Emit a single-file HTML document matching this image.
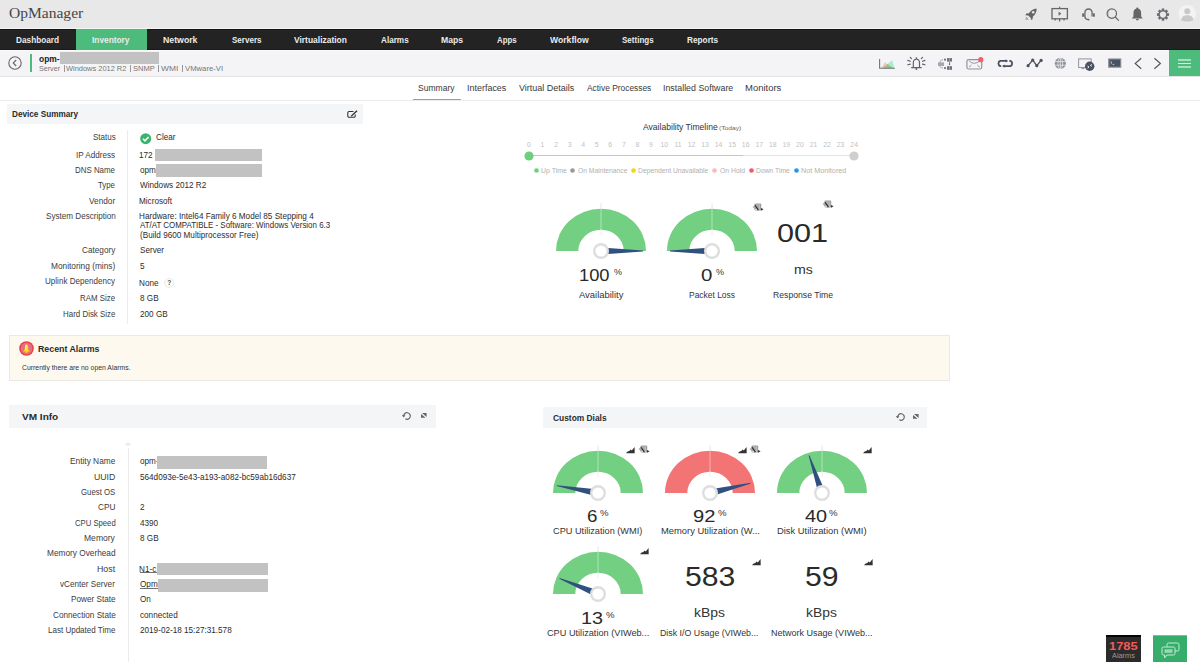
<!DOCTYPE html>
<html><head><meta charset="utf-8"><title>OpManager</title>
<style>
html,body{margin:0;padding:0;}
body{width:1200px;height:662px;overflow:hidden;position:relative;background:#fff;font-family:"Liberation Sans",sans-serif;}
.t{position:absolute;white-space:nowrap;line-height:normal;transform-origin:0 0;}
.n{}
.r{position:absolute;}
</style></head><body>
<div class="r" style="left:0px;top:0px;width:1200px;height:28px;background:#e8e8e9;"></div>
<div class="r" style="left:0px;top:28px;width:1200px;height:1px;background:#f4f4f4;"></div>
<div class="t n" style="left:9.18px;top:5.00px;font-size:14.50px;font-weight:400;color:#464646;font-family:'Liberation Serif', serif;transform:scaleX(1.0717);">OpManager</div>
<div class="r" style="left:0px;top:29px;width:1200px;height:21px;background:#232323;"></div>
<div class="r" style="left:0px;top:29px;width:1200px;height:1px;background:#151515;"></div>
<div class="r" style="left:0px;top:49px;width:1200px;height:1px;background:#1a1a1a;"></div>
<div class="r" style="left:76px;top:29px;width:71px;height:21px;background:#4cbb7c;"></div>
<div class="t" style="left:16.36px;top:34.00px;font-size:9.40px;font-weight:700;color:#ebebeb;font-family:'Liberation Sans', sans-serif;transform:scaleX(0.8799);">Dashboard</div>
<div class="t" style="left:92.46px;top:34.00px;font-size:9.40px;font-weight:700;color:#ebebeb;font-family:'Liberation Sans', sans-serif;transform:scaleX(0.8885);">Inventory</div>
<div class="t" style="left:163.43px;top:34.00px;font-size:9.40px;font-weight:700;color:#ebebeb;font-family:'Liberation Sans', sans-serif;transform:scaleX(0.9322);">Network</div>
<div class="t" style="left:231.76px;top:34.00px;font-size:9.40px;font-weight:700;color:#ebebeb;font-family:'Liberation Sans', sans-serif;transform:scaleX(0.8570);">Servers</div>
<div class="t" style="left:294.46px;top:34.00px;font-size:9.40px;font-weight:700;color:#ebebeb;font-family:'Liberation Sans', sans-serif;transform:scaleX(0.9016);">Virtualization</div>
<div class="t" style="left:380.60px;top:34.00px;font-size:9.40px;font-weight:700;color:#ebebeb;font-family:'Liberation Sans', sans-serif;transform:scaleX(0.8703);">Alarms</div>
<div class="t" style="left:441.24px;top:34.00px;font-size:9.40px;font-weight:700;color:#ebebeb;font-family:'Liberation Sans', sans-serif;transform:scaleX(0.9205);">Maps</div>
<div class="t" style="left:496.60px;top:34.00px;font-size:9.40px;font-weight:700;color:#ebebeb;font-family:'Liberation Sans', sans-serif;transform:scaleX(0.8388);">Apps</div>
<div class="t" style="left:549.60px;top:34.00px;font-size:9.40px;font-weight:700;color:#ebebeb;font-family:'Liberation Sans', sans-serif;transform:scaleX(0.9203);">Workflow</div>
<div class="t" style="left:621.76px;top:34.00px;font-size:9.40px;font-weight:700;color:#ebebeb;font-family:'Liberation Sans', sans-serif;transform:scaleX(0.8566);">Settings</div>
<div class="t" style="left:686.66px;top:34.00px;font-size:9.40px;font-weight:700;color:#ebebeb;font-family:'Liberation Sans', sans-serif;transform:scaleX(0.8812);">Reports</div>
<div class="r" style="left:0px;top:50px;width:1200px;height:1px;background:#fafafa;"></div>
<div class="r" style="left:0px;top:51px;width:1200px;height:25px;background:#f4f4f6;"></div>
<div class="r" style="left:0px;top:76px;width:1200px;height:1px;background:#e4e4e6;"></div>
<svg class="r" style="left:8px;top:56px;" width="14" height="14" viewBox="0 0 14 14" ><circle cx="7" cy="7" r="6.2" fill="none" stroke="#666" stroke-width="1.1"/><path d="M8.2 4 L5.2 7 L8.2 10" fill="none" stroke="#666" stroke-width="1.1"/></svg>
<div class="r" style="left:30px;top:54px;width:2px;height:18px;background:#4cbb7c;"></div>
<div class="t" style="left:38.66px;top:54.00px;font-size:9.20px;font-weight:700;color:#222;font-family:'Liberation Sans', sans-serif;transform:scaleX(0.9192);">opm-</div>
<div class="r" style="left:60px;top:52px;width:99px;height:11.6px;background:#c2c2c2;"></div>
<div class="t n" style="left:38.68px;top:64.00px;font-size:7.60px;font-weight:400;color:#747474;font-family:'Liberation Sans', sans-serif;transform:scaleX(0.9412);">Server</div>
<div class="t n" style="left:65.96px;top:64.00px;font-size:7.60px;font-weight:400;color:#747474;font-family:'Liberation Sans', sans-serif;transform:scaleX(0.9795);">Windows 2012 R2</div>
<div class="t n" style="left:132.66px;top:64.00px;font-size:7.60px;font-weight:400;color:#747474;font-family:'Liberation Sans', sans-serif;transform:scaleX(0.9904);">SNMP</div>
<div class="t n" style="left:160.96px;top:64.00px;font-size:7.60px;font-weight:400;color:#747474;font-family:'Liberation Sans', sans-serif;transform:scaleX(1.1038);">WMI</div>
<div class="t n" style="left:184.96px;top:64.00px;font-size:7.60px;font-weight:400;color:#747474;font-family:'Liberation Sans', sans-serif;transform:scaleX(1.0147);">VMware-VI</div>
<div class="r" style="left:63.6px;top:64.5px;width:0.8px;height:7px;background:#999;"></div>
<div class="r" style="left:130.4px;top:64.5px;width:0.8px;height:7px;background:#999;"></div>
<div class="r" style="left:158.4px;top:64.5px;width:0.8px;height:7px;background:#999;"></div>
<div class="r" style="left:182.4px;top:64.5px;width:0.8px;height:7px;background:#999;"></div>
<div class="r" style="left:1168.5px;top:50px;width:31.5px;height:26px;background:#4cbb7c;"></div>
<div class="r" style="left:1177.9px;top:59.1px;width:12.8px;height:1.7px;background:rgba(255,255,255,0.5);"></div>
<div class="r" style="left:1177.9px;top:63.0px;width:12.8px;height:1.0px;background:rgba(255,255,255,0.8);"></div>
<div class="r" style="left:1177.9px;top:66.4px;width:12.8px;height:1.7px;background:rgba(255,255,255,0.5);"></div>
<div class="r" style="left:0px;top:100px;width:1200px;height:1px;background:#ececec;"></div>
<div class="t n" style="left:418.31px;top:83.00px;font-size:8.90px;font-weight:400;color:#3a3a3a;font-family:'Liberation Sans', sans-serif;transform:scaleX(0.9631);">Summary</div>
<div class="t n" style="left:466.69px;top:83.00px;font-size:8.90px;font-weight:400;color:#3a3a3a;font-family:'Liberation Sans', sans-serif;transform:scaleX(1.0090);">Interfaces</div>
<div class="t n" style="left:518.65px;top:83.00px;font-size:8.90px;font-weight:400;color:#3a3a3a;font-family:'Liberation Sans', sans-serif;transform:scaleX(1.0133);">Virtual Details</div>
<div class="t n" style="left:586.80px;top:83.00px;font-size:8.90px;font-weight:400;color:#3a3a3a;font-family:'Liberation Sans', sans-serif;transform:scaleX(0.9448);">Active Processes</div>
<div class="t n" style="left:663.10px;top:83.00px;font-size:8.90px;font-weight:400;color:#3a3a3a;font-family:'Liberation Sans', sans-serif;transform:scaleX(0.9964);">Installed Software</div>
<div class="t n" style="left:745.24px;top:83.00px;font-size:8.90px;font-weight:400;color:#3a3a3a;font-family:'Liberation Sans', sans-serif;transform:scaleX(1.0662);">Monitors</div>
<div class="r" style="left:412.5px;top:98.5px;width:48.5px;height:1.6px;background:#4fcf6c;"></div>
<div class="r" style="left:6.5px;top:103.5px;width:356px;height:20px;background:#f4f5f7;"></div>
<div class="t" style="left:11.77px;top:109.00px;font-size:8.80px;font-weight:700;color:#2b2b2b;font-family:'Liberation Sans', sans-serif;transform:scaleX(0.9316);">Device Summary</div>
<svg class="r" style="left:346.5px;top:109.5px;" width="11" height="8" viewBox="0 0 11 8" ><path d="M6.5 1.5 H2 A1.2 1.2 0 0 0 0.8 2.7 V6 A1.2 1.2 0 0 0 2 7.2 H7 A1.2 1.2 0 0 0 8.2 6 V4.5" fill="none" stroke="#333" stroke-width="1.1"/><path d="M4 5.5 L9.5 0.3 L10.5 1.3 L5 6.3 L3.8 6.6 Z" fill="#333"/></svg>
<div class="r" style="left:127px;top:130px;width:1px;height:194px;background:#ececec;"></div>
<div class="t n" style="left:92.54px;top:132.00px;font-size:8.60px;font-weight:400;color:#3c3c3c;font-family:'Liberation Sans', sans-serif;transform:scaleX(0.9328);">Status</div>
<div class="t n" style="left:76.17px;top:150.00px;font-size:8.60px;font-weight:400;color:#3c3c3c;font-family:'Liberation Sans', sans-serif;transform:scaleX(0.9436);">IP Address</div>
<div class="t n" style="left:75.37px;top:165.00px;font-size:8.60px;font-weight:400;color:#3c3c3c;font-family:'Liberation Sans', sans-serif;transform:scaleX(0.9199);">DNS Name</div>
<div class="t n" style="left:98.44px;top:180.00px;font-size:8.60px;font-weight:400;color:#3c3c3c;font-family:'Liberation Sans', sans-serif;transform:scaleX(0.9081);">Type</div>
<div class="t n" style="left:139.96px;top:180.00px;font-size:8.60px;font-weight:400;color:#2c2c2c;font-family:'Liberation Sans', sans-serif;transform:scaleX(0.9500);">Windows 2012 R2</div>
<div class="t n" style="left:88.96px;top:196.00px;font-size:8.60px;font-weight:400;color:#3c3c3c;font-family:'Liberation Sans', sans-serif;transform:scaleX(0.9613);">Vendor</div>
<div class="t n" style="left:139.35px;top:196.00px;font-size:8.60px;font-weight:400;color:#2c2c2c;font-family:'Liberation Sans', sans-serif;transform:scaleX(0.9500);">Microsoft</div>
<div class="t n" style="left:45.63px;top:211.00px;font-size:8.60px;font-weight:400;color:#3c3c3c;font-family:'Liberation Sans', sans-serif;transform:scaleX(0.9434);">System Description</div>
<div class="t n" style="left:139.35px;top:211.00px;font-size:8.60px;font-weight:400;color:#2c2c2c;font-family:'Liberation Sans', sans-serif;transform:scaleX(0.9500);">Hardware: Intel64 Family 6 Model 85 Stepping 4</div>
<div class="t n" style="left:81.69px;top:245.00px;font-size:8.60px;font-weight:400;color:#3c3c3c;font-family:'Liberation Sans', sans-serif;transform:scaleX(0.9540);">Category</div>
<div class="t n" style="left:139.63px;top:245.00px;font-size:8.60px;font-weight:400;color:#2c2c2c;font-family:'Liberation Sans', sans-serif;transform:scaleX(0.9500);">Server</div>
<div class="t n" style="left:51.23px;top:261.00px;font-size:8.60px;font-weight:400;color:#3c3c3c;font-family:'Liberation Sans', sans-serif;transform:scaleX(0.9680);">Monitoring (mins)</div>
<div class="t n" style="left:139.67px;top:261.00px;font-size:8.60px;font-weight:400;color:#2c2c2c;font-family:'Liberation Sans', sans-serif;transform:scaleX(0.9500);">5</div>
<div class="t n" style="left:44.99px;top:276.00px;font-size:8.60px;font-weight:400;color:#3c3c3c;font-family:'Liberation Sans', sans-serif;transform:scaleX(0.9389);">Uplink Dependency</div>
<div class="t n" style="left:80.27px;top:293.00px;font-size:8.60px;font-weight:400;color:#3c3c3c;font-family:'Liberation Sans', sans-serif;transform:scaleX(0.9179);">RAM Size</div>
<div class="t n" style="left:139.63px;top:293.00px;font-size:8.60px;font-weight:400;color:#2c2c2c;font-family:'Liberation Sans', sans-serif;transform:scaleX(0.9500);">8 GB</div>
<div class="t n" style="left:62.86px;top:309.00px;font-size:8.60px;font-weight:400;color:#3c3c3c;font-family:'Liberation Sans', sans-serif;transform:scaleX(0.9234);">Hard Disk Size</div>
<div class="t n" style="left:139.59px;top:309.00px;font-size:8.60px;font-weight:400;color:#2c2c2c;font-family:'Liberation Sans', sans-serif;transform:scaleX(0.9500);">200 GB</div>
<div class="t n" style="left:140.00px;top:220.00px;font-size:8.60px;font-weight:400;color:#2c2c2c;font-family:'Liberation Sans', sans-serif;transform:scaleX(0.9232);">AT/AT COMPATIBLE - Software: Windows Version 6.3</div>
<div class="t n" style="left:139.51px;top:230.00px;font-size:8.60px;font-weight:400;color:#2c2c2c;font-family:'Liberation Sans', sans-serif;transform:scaleX(0.9500);">(Build 9600 Multiprocessor Free)</div>
<div class="t n" style="left:139.35px;top:278.00px;font-size:8.60px;font-weight:400;color:#2c2c2c;font-family:'Liberation Sans', sans-serif;transform:scaleX(0.9500);">None</div>
<svg class="r" style="left:164px;top:278.3px;" width="10.5" height="10" viewBox="0 0 10.5 10" ><circle cx="5.2" cy="5" r="4.5" fill="#fdfdfd" stroke="#e6e6e6" stroke-width="0.9"/><text x="5.3" y="7.3" font-size="6.6" font-weight="700" text-anchor="middle" fill="#555" font-family="Liberation Sans">?</text></svg>
<svg class="r" style="left:140px;top:133px;" width="11.5" height="11.5" viewBox="0 0 11.5 11.5" ><circle cx="5.7" cy="5.7" r="5.5" fill="#3cb36d"/><path d="M3 5.8 L5 7.8 L8.6 4" fill="none" stroke="#fff" stroke-width="1.5"/></svg>
<div class="t n" style="left:156.39px;top:132.00px;font-size:8.60px;font-weight:400;color:#2c2c2c;font-family:'Liberation Sans', sans-serif;transform:scaleX(0.9500);">Clear</div>
<div class="t n" style="left:139.39px;top:150.00px;font-size:8.60px;font-weight:400;color:#2c2c2c;font-family:'Liberation Sans', sans-serif;transform:scaleX(0.9500);">172</div>
<div class="r" style="left:155px;top:148.5px;width:107px;height:12px;background:#c2c2c2;"></div>
<div class="t n" style="left:139.67px;top:165.00px;font-size:8.60px;font-weight:400;color:#2c2c2c;font-family:'Liberation Sans', sans-serif;transform:scaleX(0.9500);">opm</div>
<div class="r" style="left:155.5px;top:164px;width:106.5px;height:12.6px;background:#c2c2c2;"></div>
<div class="t n" style="left:642.80px;top:122.00px;font-size:8.40px;font-weight:400;color:#333;font-family:'Liberation Sans', sans-serif;transform:scaleX(1.0241);">Availability Timeline</div>
<div class="t n" style="left:719.10px;top:124.00px;font-size:6.20px;font-weight:400;color:#666;font-family:'Liberation Sans', sans-serif;transform:scaleX(1.0803);">(Today)</div>
<div class="t n" style="left:527.07px;top:141.00px;font-size:6.90px;font-weight:400;color:#c2c2c2;font-family:'Liberation Sans', sans-serif;">0</div>
<div class="t n" style="left:540.53px;top:141.00px;font-size:6.90px;font-weight:400;color:#c2c2c2;font-family:'Liberation Sans', sans-serif;">1</div>
<div class="t n" style="left:554.19px;top:141.00px;font-size:6.90px;font-weight:400;color:#c2c2c2;font-family:'Liberation Sans', sans-serif;">2</div>
<div class="t n" style="left:567.74px;top:141.00px;font-size:6.90px;font-weight:400;color:#c2c2c2;font-family:'Liberation Sans', sans-serif;">3</div>
<div class="t n" style="left:581.32px;top:141.00px;font-size:6.90px;font-weight:400;color:#c2c2c2;font-family:'Liberation Sans', sans-serif;">4</div>
<div class="t n" style="left:594.84px;top:141.00px;font-size:6.90px;font-weight:400;color:#c2c2c2;font-family:'Liberation Sans', sans-serif;">5</div>
<div class="t n" style="left:608.35px;top:141.00px;font-size:6.90px;font-weight:400;color:#c2c2c2;font-family:'Liberation Sans', sans-serif;">6</div>
<div class="t n" style="left:621.94px;top:141.00px;font-size:6.90px;font-weight:400;color:#c2c2c2;font-family:'Liberation Sans', sans-serif;">7</div>
<div class="t n" style="left:635.47px;top:141.00px;font-size:6.90px;font-weight:400;color:#c2c2c2;font-family:'Liberation Sans', sans-serif;">8</div>
<div class="t n" style="left:649.04px;top:141.00px;font-size:6.90px;font-weight:400;color:#c2c2c2;font-family:'Liberation Sans', sans-serif;">9</div>
<div class="t n" style="left:660.53px;top:141.00px;font-size:6.90px;font-weight:400;color:#c2c2c2;font-family:'Liberation Sans', sans-serif;">10</div>
<div class="t n" style="left:674.38px;top:141.00px;font-size:6.90px;font-weight:400;color:#c2c2c2;font-family:'Liberation Sans', sans-serif;">11</div>
<div class="t n" style="left:687.68px;top:141.00px;font-size:6.90px;font-weight:400;color:#c2c2c2;font-family:'Liberation Sans', sans-serif;">12</div>
<div class="t n" style="left:701.20px;top:141.00px;font-size:6.90px;font-weight:400;color:#c2c2c2;font-family:'Liberation Sans', sans-serif;">13</div>
<div class="t n" style="left:714.72px;top:141.00px;font-size:6.90px;font-weight:400;color:#c2c2c2;font-family:'Liberation Sans', sans-serif;">14</div>
<div class="t n" style="left:728.30px;top:141.00px;font-size:6.90px;font-weight:400;color:#c2c2c2;font-family:'Liberation Sans', sans-serif;">15</div>
<div class="t n" style="left:741.85px;top:141.00px;font-size:6.90px;font-weight:400;color:#c2c2c2;font-family:'Liberation Sans', sans-serif;">16</div>
<div class="t n" style="left:755.43px;top:141.00px;font-size:6.90px;font-weight:400;color:#c2c2c2;font-family:'Liberation Sans', sans-serif;">17</div>
<div class="t n" style="left:768.95px;top:141.00px;font-size:6.90px;font-weight:400;color:#c2c2c2;font-family:'Liberation Sans', sans-serif;">18</div>
<div class="t n" style="left:782.52px;top:141.00px;font-size:6.90px;font-weight:400;color:#c2c2c2;font-family:'Liberation Sans', sans-serif;">19</div>
<div class="t n" style="left:796.12px;top:141.00px;font-size:6.90px;font-weight:400;color:#c2c2c2;font-family:'Liberation Sans', sans-serif;">20</div>
<div class="t n" style="left:809.70px;top:141.00px;font-size:6.90px;font-weight:400;color:#c2c2c2;font-family:'Liberation Sans', sans-serif;">21</div>
<div class="t n" style="left:823.27px;top:141.00px;font-size:6.90px;font-weight:400;color:#c2c2c2;font-family:'Liberation Sans', sans-serif;">22</div>
<div class="t n" style="left:836.79px;top:141.00px;font-size:6.90px;font-weight:400;color:#c2c2c2;font-family:'Liberation Sans', sans-serif;">23</div>
<div class="t n" style="left:850.30px;top:141.00px;font-size:6.90px;font-weight:400;color:#c2c2c2;font-family:'Liberation Sans', sans-serif;">24</div>
<div class="r" style="left:529px;top:155.3px;width:325px;height:1.1px;background:#e3e3e3;"></div>
<div class="r" style="left:529px;top:155.3px;width:213.5px;height:1.1px;background:#9fe0a8;"></div>
<svg class="r" style="left:524px;top:151px;" width="10" height="10" viewBox="0 0 10 10" ><circle cx="5" cy="5" r="4.6" fill="#6fcf7f"/></svg>
<svg class="r" style="left:849.2px;top:150.8px;" width="10" height="10" viewBox="0 0 10 10" ><circle cx="5" cy="5" r="4.6" fill="#cfcfcf"/></svg>
<svg class="r" style="left:534.1px;top:167.7px;" width="5" height="5" viewBox="0 0 5 5" ><circle cx="2.5" cy="2.5" r="2.3" fill="#6fcf7f"/></svg>
<div class="t n" style="left:540.98px;top:167.00px;font-size:6.60px;font-weight:400;color:#b0b0b0;font-family:'Liberation Sans', sans-serif;transform:scaleX(1.0522);">Up Time</div>
<svg class="r" style="left:569.9px;top:167.7px;" width="5" height="5" viewBox="0 0 5 5" ><circle cx="2.5" cy="2.5" r="2.3" fill="#999999"/></svg>
<div class="t n" style="left:577.50px;top:167.00px;font-size:6.60px;font-weight:400;color:#b0b0b0;font-family:'Liberation Sans', sans-serif;transform:scaleX(1.0226);">On Maintenance</div>
<svg class="r" style="left:630.9px;top:167.7px;" width="5" height="5" viewBox="0 0 5 5" ><circle cx="2.5" cy="2.5" r="2.3" fill="#f5d311"/></svg>
<div class="t n" style="left:637.96px;top:167.00px;font-size:6.60px;font-weight:400;color:#b0b0b0;font-family:'Liberation Sans', sans-serif;transform:scaleX(1.0253);">Dependent Unavailable</div>
<svg class="r" style="left:712.2px;top:167.7px;" width="5" height="5" viewBox="0 0 5 5" ><circle cx="2.5" cy="2.5" r="2.3" fill="#f9b9b9"/></svg>
<div class="t n" style="left:719.69px;top:167.00px;font-size:6.60px;font-weight:400;color:#b0b0b0;font-family:'Liberation Sans', sans-serif;transform:scaleX(1.0357);">On Hold</div>
<svg class="r" style="left:749.0px;top:167.7px;" width="5" height="5" viewBox="0 0 5 5" ><circle cx="2.5" cy="2.5" r="2.3" fill="#ef5b62"/></svg>
<div class="t n" style="left:756.16px;top:167.00px;font-size:6.60px;font-weight:400;color:#b0b0b0;font-family:'Liberation Sans', sans-serif;transform:scaleX(1.0256);">Down Time</div>
<svg class="r" style="left:794.0px;top:167.7px;" width="5" height="5" viewBox="0 0 5 5" ><circle cx="2.5" cy="2.5" r="2.3" fill="#2a93ee"/></svg>
<div class="t n" style="left:801.12px;top:167.00px;font-size:6.60px;font-weight:400;color:#b0b0b0;font-family:'Liberation Sans', sans-serif;transform:scaleX(1.0941);">Not Monitored</div>
<svg class="r" style="left:553.85px;top:203.0px;" width="94" height="60" viewBox="0 0 94 60" ><path d="M2.00 48 A45 42.30 0 0 1 92.00 48 L69.70 48 A22.7 21.34 0 0 0 24.30 48 Z" fill="#73cf82"/><line x1="47.0" y1="0.20" x2="47.0" y2="5.70" stroke="#e4e6ea" stroke-width="1"/><line x1="47.0" y1="5.70" x2="47.0" y2="31.96" stroke="rgba(255,255,255,0.45)" stroke-width="1"/><line x1="47.0" y1="26.66" x2="47.0" y2="31.96" stroke="#eceef1" stroke-width="1"/><path d="M47.00 51.60 L89.00 48.40 L89.00 47.60 L47.00 44.40 Z" fill="#30507f"/><circle cx="47.0" cy="48" r="6.8" fill="#fff" stroke="#dedede" stroke-width="2.4"/></svg>
<svg class="r" style="left:665.4px;top:203.0px;" width="94" height="60" viewBox="0 0 94 60" ><path d="M2.00 48 A45 42.30 0 0 1 92.00 48 L69.70 48 A22.7 21.34 0 0 0 24.30 48 Z" fill="#73cf82"/><line x1="47.0" y1="0.20" x2="47.0" y2="5.70" stroke="#e4e6ea" stroke-width="1"/><line x1="47.0" y1="5.70" x2="47.0" y2="31.96" stroke="rgba(255,255,255,0.45)" stroke-width="1"/><line x1="47.0" y1="26.66" x2="47.0" y2="31.96" stroke="#eceef1" stroke-width="1"/><path d="M47.00 44.40 L5.00 47.60 L5.00 48.40 L47.00 51.60 Z" fill="#30507f"/><circle cx="47.0" cy="48" r="6.8" fill="#fff" stroke="#dedede" stroke-width="2.4"/></svg>
<div class="t n" style="left:579.33px;top:265.00px;font-size:17.40px;font-weight:400;color:#2a2a2a;font-family:'Liberation Sans', sans-serif;transform:scaleX(1.0533);">100</div>
<div class="t n" style="left:614.28px;top:267.00px;font-size:8.50px;font-weight:400;color:#333;font-family:'Liberation Sans', sans-serif;transform:scaleX(1.0617);">%</div>
<div class="t n" style="left:700.88px;top:265.00px;font-size:17.40px;font-weight:400;color:#2a2a2a;font-family:'Liberation Sans', sans-serif;transform:scaleX(1.1734);">0</div>
<div class="t n" style="left:715.98px;top:267.00px;font-size:8.50px;font-weight:400;color:#333;font-family:'Liberation Sans', sans-serif;transform:scaleX(1.0617);">%</div>
<div class="t n" style="left:578.50px;top:290.00px;font-size:8.80px;font-weight:400;color:#333;font-family:'Liberation Sans', sans-serif;transform:scaleX(1.0724);">Availability</div>
<div class="t n" style="left:689.32px;top:290.00px;font-size:8.80px;font-weight:400;color:#333;font-family:'Liberation Sans', sans-serif;transform:scaleX(0.9594);">Packet Loss</div>
<div class="t n" style="left:777.48px;top:219.00px;font-size:25.50px;font-weight:400;color:#2a2a2a;font-family:'Liberation Sans', sans-serif;transform:scaleX(1.1988);">001</div>
<div class="t n" style="left:793.58px;top:263.00px;font-size:12.50px;font-weight:400;color:#333;font-family:'Liberation Sans', sans-serif;transform:scaleX(1.1336);">ms</div>
<div class="t n" style="left:773.31px;top:290.00px;font-size:8.80px;font-weight:400;color:#333;font-family:'Liberation Sans', sans-serif;transform:scaleX(0.9831);">Response Time</div>
<svg class="r" style="left:751.5px;top:202.8px;" width="13" height="9" viewBox="0 0 13 9" ><path d="M0.5 4 L3.6 1.3 L3.6 6.8 Z" fill="#b0b0b0"/><rect x="2.6" y="0.5" width="6.6" height="7.1" rx="0.8" fill="#9c9c9c"/><path d="M4.3 1.2 V7 M5.9 1.2 V7 M7.5 1.2 V7" stroke="#d6d6d6" stroke-width="0.55"/><path d="M3.2 2.2 L6.4 7.2" stroke="#262626" stroke-width="1.2"/><path d="M9 5 L11.6 6.3 L9 7.7 Z" fill="#333"/><circle cx="3.9" cy="6.6" r="0.7" fill="#fff"/></svg>
<svg class="r" style="left:821.5px;top:200.3px;" width="13" height="9" viewBox="0 0 13 9" ><path d="M0.5 4 L3.6 1.3 L3.6 6.8 Z" fill="#b0b0b0"/><rect x="2.6" y="0.5" width="6.6" height="7.1" rx="0.8" fill="#9c9c9c"/><path d="M4.3 1.2 V7 M5.9 1.2 V7 M7.5 1.2 V7" stroke="#d6d6d6" stroke-width="0.55"/><path d="M3.2 2.2 L6.4 7.2" stroke="#262626" stroke-width="1.2"/><path d="M9 5 L11.6 6.3 L9 7.7 Z" fill="#333"/><circle cx="3.9" cy="6.6" r="0.7" fill="#fff"/></svg>
<div class="r" style="left:9px;top:335px;width:941px;height:46px;background:#fdf9ef;box-sizing:border-box;border:1px solid #ebe9e3;"></div>
<svg class="r" style="left:19.3px;top:340.8px;" width="16" height="16" viewBox="0 0 16 16" ><circle cx="7.5" cy="7.5" r="7.3" fill="#ef3b47"/><circle cx="7.5" cy="7.5" r="5.9" fill="#e7707f"/><path d="M7.5 3.4 C8.6 3.4 9 4.3 9 5.6 L9.3 8.8 L10.9 10.4 H4.1 L5.7 8.8 L6 5.6 C6 4.3 6.4 3.4 7.5 3.4 Z" fill="#ffdc1e"/><path d="M7.5 3.6 C6.6 3.8 6.5 5 6.4 6.5 L6.2 9 L7.5 9 Z" fill="#fff2a0"/><circle cx="7.5" cy="11" r="0.9" fill="#ffdc1e"/></svg>
<div class="t" style="left:38.13px;top:343.00px;font-size:9.40px;font-weight:700;color:#2b2b2b;font-family:'Liberation Sans', sans-serif;transform:scaleX(0.9398);">Recent Alarms</div>
<div class="t n" style="left:21.66px;top:364.00px;font-size:7.00px;font-weight:400;color:#333;font-family:'Liberation Sans', sans-serif;transform:scaleX(0.9791);">Currently there are no open Alarms.</div>
<div class="r" style="left:9.3px;top:404.7px;width:427px;height:23.2px;background:#f4f5f7;"></div>
<div class="t" style="left:22.15px;top:412.00px;font-size:9.30px;font-weight:700;color:#2b2b2b;font-family:'Liberation Sans', sans-serif;transform:scaleX(1.0798);">VM Info</div>
<svg class="r" style="left:402px;top:410.8px;" width="10" height="10" viewBox="0 0 10 10" ><path d="M1.7 5 A3.3 3.3 0 1 1 3.35 7.86" fill="none" stroke="#666" stroke-width="1.15"/><path d="M-0.1 4.3 L3.4 4.3 L1.65 6.5 Z" fill="#666"/></svg>
<svg class="r" style="left:420.7px;top:412.6px;" width="6" height="5" viewBox="0 0 6 5" ><path d="M0 0.9 L4.6 4.8 L0 4.8 Z M1 0 L5.6 0 L5.6 3.9 Z" fill="#666"/></svg>
<div class="r" style="left:127.5px;top:447.5px;width:1px;height:215px;background:#ececec;"></div>
<svg class="r" style="left:123.5px;top:441px;" width="8" height="5" viewBox="0 0 8 5" ><path d="M0.5 4.5 L4 0.8 L7.5 4.5 Z" fill="#ececec"/></svg>
<div class="t n" style="left:70.03px;top:456.00px;font-size:8.60px;font-weight:400;color:#3c3c3c;font-family:'Liberation Sans', sans-serif;transform:scaleX(0.9683);">Entity Name</div>
<div class="t n" style="left:94.15px;top:472.00px;font-size:8.60px;font-weight:400;color:#3c3c3c;font-family:'Liberation Sans', sans-serif;transform:scaleX(1.0124);">UUID</div>
<div class="t n" style="left:139.67px;top:472.00px;font-size:8.60px;font-weight:400;color:#2c2c2c;font-family:'Liberation Sans', sans-serif;transform:scaleX(0.9500);">564d093e-5e43-a193-a082-bc59ab16d637</div>
<div class="t n" style="left:81.11px;top:487.00px;font-size:8.60px;font-weight:400;color:#3c3c3c;font-family:'Liberation Sans', sans-serif;transform:scaleX(0.9069);">Guest OS</div>
<div class="t n" style="left:98.19px;top:502.00px;font-size:8.60px;font-weight:400;color:#3c3c3c;font-family:'Liberation Sans', sans-serif;transform:scaleX(0.9607);">CPU</div>
<div class="t n" style="left:139.59px;top:502.00px;font-size:8.60px;font-weight:400;color:#2c2c2c;font-family:'Liberation Sans', sans-serif;transform:scaleX(0.9500);">2</div>
<div class="t n" style="left:74.81px;top:518.00px;font-size:8.60px;font-weight:400;color:#3c3c3c;font-family:'Liberation Sans', sans-serif;transform:scaleX(0.8960);">CPU Speed</div>
<div class="t n" style="left:139.84px;top:518.00px;font-size:8.60px;font-weight:400;color:#2c2c2c;font-family:'Liberation Sans', sans-serif;transform:scaleX(0.9500);">4390</div>
<div class="t n" style="left:84.12px;top:533.00px;font-size:8.60px;font-weight:400;color:#3c3c3c;font-family:'Liberation Sans', sans-serif;transform:scaleX(0.9948);">Memory</div>
<div class="t n" style="left:139.63px;top:533.00px;font-size:8.60px;font-weight:400;color:#2c2c2c;font-family:'Liberation Sans', sans-serif;transform:scaleX(0.9500);">8 GB</div>
<div class="t n" style="left:46.94px;top:548.00px;font-size:8.60px;font-weight:400;color:#3c3c3c;font-family:'Liberation Sans', sans-serif;transform:scaleX(0.9634);">Memory Overhead</div>
<div class="t n" style="left:96.89px;top:564.00px;font-size:8.60px;font-weight:400;color:#3c3c3c;font-family:'Liberation Sans', sans-serif;transform:scaleX(1.0270);">Host</div>
<div class="t n" style="left:60.26px;top:579.00px;font-size:8.60px;font-weight:400;color:#3c3c3c;font-family:'Liberation Sans', sans-serif;transform:scaleX(0.9493);">vCenter Server</div>
<div class="t n" style="left:70.74px;top:594.00px;font-size:8.60px;font-weight:400;color:#3c3c3c;font-family:'Liberation Sans', sans-serif;transform:scaleX(0.9530);">Power State</div>
<div class="t n" style="left:139.63px;top:594.00px;font-size:8.60px;font-weight:400;color:#2c2c2c;font-family:'Liberation Sans', sans-serif;transform:scaleX(0.9500);">On</div>
<div class="t n" style="left:52.59px;top:610.00px;font-size:8.60px;font-weight:400;color:#3c3c3c;font-family:'Liberation Sans', sans-serif;transform:scaleX(0.9517);">Connection State</div>
<div class="t n" style="left:139.67px;top:610.00px;font-size:8.60px;font-weight:400;color:#2c2c2c;font-family:'Liberation Sans', sans-serif;transform:scaleX(0.9500);">connected</div>
<div class="t n" style="left:47.96px;top:625.00px;font-size:8.60px;font-weight:400;color:#3c3c3c;font-family:'Liberation Sans', sans-serif;transform:scaleX(0.9336);">Last Updated Time</div>
<div class="t n" style="left:139.59px;top:625.00px;font-size:8.60px;font-weight:400;color:#2c2c2c;font-family:'Liberation Sans', sans-serif;transform:scaleX(0.9500);">2019-02-18 15:27:31.578</div>
<div class="t n" style="left:139.67px;top:456.00px;font-size:8.60px;font-weight:400;color:#2c2c2c;font-family:'Liberation Sans', sans-serif;transform:scaleX(0.9500);">opm-</div>
<div class="r" style="left:157px;top:456.3px;width:110.2px;height:12.3px;background:#c2c2c2;"></div>
<div class="t n" style="left:139.35px;top:564.00px;font-size:8.60px;font-weight:400;color:#2c2c2c;font-family:'Liberation Sans', sans-serif;transform:scaleX(0.9500);">N1-c</div>
<div class="r" style="left:140px;top:572.4px;width:17.2px;height:0.8px;background:#707070;"></div>
<div class="r" style="left:157.1px;top:563.2px;width:111.1px;height:11.6px;background:#c2c2c2;"></div>
<div class="t n" style="left:139.63px;top:579.00px;font-size:8.60px;font-weight:400;color:#2c2c2c;font-family:'Liberation Sans', sans-serif;transform:scaleX(0.9500);">Opm</div>
<div class="r" style="left:140px;top:587.6px;width:18px;height:0.8px;background:#707070;"></div>
<div class="r" style="left:157.6px;top:578.5px;width:110.6px;height:13px;background:#c2c2c2;"></div>
<div class="r" style="left:542.5px;top:406.8px;width:384.7px;height:21px;background:#f4f5f7;"></div>
<div class="t" style="left:553.16px;top:413.00px;font-size:8.70px;font-weight:700;color:#2b2b2b;font-family:'Liberation Sans', sans-serif;transform:scaleX(0.9654);">Custom Dials</div>
<svg class="r" style="left:896px;top:412px;" width="10" height="10" viewBox="0 0 10 10" ><path d="M1.7 5 A3.3 3.3 0 1 1 3.35 7.86" fill="none" stroke="#666" stroke-width="1.15"/><path d="M-0.1 4.3 L3.4 4.3 L1.65 6.5 Z" fill="#666"/></svg>
<svg class="r" style="left:913.2px;top:414.2px;" width="6" height="5" viewBox="0 0 6 5" ><path d="M0 0.9 L4.6 4.8 L0 4.8 Z M1 0 L5.6 0 L5.6 3.9 Z" fill="#666"/></svg>
<svg class="r" style="left:551.3px;top:444.8px;" width="94" height="60" viewBox="0 0 94 60" ><path d="M2.00 48 A45 42.30 0 0 1 92.00 48 L69.70 48 A22.7 21.34 0 0 0 24.30 48 Z" fill="#73cf82"/><line x1="47.0" y1="0.20" x2="47.0" y2="5.70" stroke="#e4e6ea" stroke-width="1"/><line x1="47.0" y1="5.70" x2="47.0" y2="31.96" stroke="rgba(255,255,255,0.45)" stroke-width="1"/><line x1="47.0" y1="26.66" x2="47.0" y2="31.96" stroke="#eceef1" stroke-width="1"/><path d="M47.67 44.46 L5.82 40.21 L5.67 41.00 L46.33 51.54 Z" fill="#30507f"/><circle cx="47.0" cy="48" r="6.8" fill="#fff" stroke="#dedede" stroke-width="2.4"/></svg>
<svg class="r" style="left:663.1px;top:444.8px;" width="94" height="60" viewBox="0 0 94 60" ><path d="M2.00 48 A45 42.30 0 0 1 92.00 48 L69.70 48 A22.7 21.34 0 0 0 24.30 48 Z" fill="#f27474"/><line x1="47.0" y1="0.20" x2="47.0" y2="5.70" stroke="#e4e6ea" stroke-width="1"/><line x1="47.0" y1="5.70" x2="47.0" y2="31.96" stroke="rgba(255,255,255,0.45)" stroke-width="1"/><line x1="47.0" y1="26.66" x2="47.0" y2="31.96" stroke="#eceef1" stroke-width="1"/><path d="M47.90 51.49 L87.78 38.57 L87.58 37.79 L46.10 44.51 Z" fill="#30507f"/><circle cx="47.0" cy="48" r="6.8" fill="#fff" stroke="#dedede" stroke-width="2.4"/></svg>
<svg class="r" style="left:774.8px;top:444.8px;" width="94" height="60" viewBox="0 0 94 60" ><path d="M2.00 48 A45 42.30 0 0 1 92.00 48 L69.70 48 A22.7 21.34 0 0 0 24.30 48 Z" fill="#73cf82"/><line x1="47.0" y1="0.20" x2="47.0" y2="5.70" stroke="#e4e6ea" stroke-width="1"/><line x1="47.0" y1="5.70" x2="47.0" y2="31.96" stroke="rgba(255,255,255,0.45)" stroke-width="1"/><line x1="47.0" y1="26.66" x2="47.0" y2="31.96" stroke="#eceef1" stroke-width="1"/><path d="M50.42 46.89 L34.40 10.33 L33.64 10.58 L43.58 49.11 Z" fill="#30507f"/><circle cx="47.0" cy="48" r="6.8" fill="#fff" stroke="#dedede" stroke-width="2.4"/></svg>
<svg class="r" style="left:551.0px;top:546.0px;" width="94" height="60" viewBox="0 0 94 60" ><path d="M2.00 48 A45 42.30 0 0 1 92.00 48 L69.70 48 A22.7 21.34 0 0 0 24.30 48 Z" fill="#73cf82"/><line x1="47.0" y1="0.20" x2="47.0" y2="5.70" stroke="#e4e6ea" stroke-width="1"/><line x1="47.0" y1="5.70" x2="47.0" y2="31.96" stroke="rgba(255,255,255,0.45)" stroke-width="1"/><line x1="47.0" y1="26.66" x2="47.0" y2="31.96" stroke="#eceef1" stroke-width="1"/><path d="M48.43 44.70 L8.61 31.95 L8.30 32.69 L45.57 51.30 Z" fill="#30507f"/><circle cx="47.0" cy="48" r="6.8" fill="#fff" stroke="#dedede" stroke-width="2.4"/></svg>
<svg class="r" style="left:626.1px;top:447px;" width="9" height="6.5" viewBox="0 0 9 6.5" ><path d="M0 6.2 L1.6 4.4 L3.4 3.9 L4.5 2.5 L5.8 3.6 L8.6 0 L8.7 6.2 Z" fill="#333"/></svg>
<svg class="r" style="left:637.5px;top:444.9px;" width="13" height="9" viewBox="0 0 13 9" ><path d="M0.5 4 L3.6 1.3 L3.6 6.8 Z" fill="#b0b0b0"/><rect x="2.6" y="0.5" width="6.6" height="7.1" rx="0.8" fill="#9c9c9c"/><path d="M4.3 1.2 V7 M5.9 1.2 V7 M7.5 1.2 V7" stroke="#d6d6d6" stroke-width="0.55"/><path d="M3.2 2.2 L6.4 7.2" stroke="#262626" stroke-width="1.2"/><path d="M9 5 L11.6 6.3 L9 7.7 Z" fill="#333"/><circle cx="3.9" cy="6.6" r="0.7" fill="#fff"/></svg>
<svg class="r" style="left:737.6px;top:447px;" width="9" height="6.5" viewBox="0 0 9 6.5" ><path d="M0 6.2 L1.6 4.4 L3.4 3.9 L4.5 2.5 L5.8 3.6 L8.6 0 L8.7 6.2 Z" fill="#333"/></svg>
<svg class="r" style="left:749.1px;top:444.9px;" width="13" height="9" viewBox="0 0 13 9" ><path d="M0.5 4 L3.6 1.3 L3.6 6.8 Z" fill="#b0b0b0"/><rect x="2.6" y="0.5" width="6.6" height="7.1" rx="0.8" fill="#9c9c9c"/><path d="M4.3 1.2 V7 M5.9 1.2 V7 M7.5 1.2 V7" stroke="#d6d6d6" stroke-width="0.55"/><path d="M3.2 2.2 L6.4 7.2" stroke="#262626" stroke-width="1.2"/><path d="M9 5 L11.6 6.3 L9 7.7 Z" fill="#333"/><circle cx="3.9" cy="6.6" r="0.7" fill="#fff"/></svg>
<svg class="r" style="left:863.3px;top:447px;" width="9" height="6.5" viewBox="0 0 9 6.5" ><path d="M0 6.2 L1.6 4.4 L3.4 3.9 L4.5 2.5 L5.8 3.6 L8.6 0 L8.7 6.2 Z" fill="#333"/></svg>
<svg class="r" style="left:640.1px;top:548.4px;" width="9" height="6.5" viewBox="0 0 9 6.5" ><path d="M0 6.2 L1.6 4.4 L3.4 3.9 L4.5 2.5 L5.8 3.6 L8.6 0 L8.7 6.2 Z" fill="#333"/></svg>
<svg class="r" style="left:751.7px;top:559px;" width="9" height="6.5" viewBox="0 0 9 6.5" ><path d="M0 6.2 L1.6 4.4 L3.4 3.9 L4.5 2.5 L5.8 3.6 L8.6 0 L8.7 6.2 Z" fill="#333"/></svg>
<svg class="r" style="left:863.5px;top:559px;" width="9" height="6.5" viewBox="0 0 9 6.5" ><path d="M0 6.2 L1.6 4.4 L3.4 3.9 L4.5 2.5 L5.8 3.6 L8.6 0 L8.7 6.2 Z" fill="#333"/></svg>
<div class="t n" style="left:586.86px;top:508.00px;font-size:15.80px;font-weight:400;color:#2a2a2a;font-family:'Liberation Sans', sans-serif;transform:scaleX(1.1842);">6</div>
<div class="t n" style="left:600.46px;top:508.00px;font-size:8.30px;font-weight:400;color:#333;font-family:'Liberation Sans', sans-serif;transform:scaleX(1.1607);">%</div>
<div class="t n" style="left:692.59px;top:508.00px;font-size:15.80px;font-weight:400;color:#2a2a2a;font-family:'Liberation Sans', sans-serif;transform:scaleX(1.2783);">92</div>
<div class="t n" style="left:717.66px;top:508.00px;font-size:8.30px;font-weight:400;color:#333;font-family:'Liberation Sans', sans-serif;transform:scaleX(1.1607);">%</div>
<div class="t n" style="left:804.60px;top:508.00px;font-size:15.80px;font-weight:400;color:#2a2a2a;font-family:'Liberation Sans', sans-serif;transform:scaleX(1.2598);">40</div>
<div class="t n" style="left:829.36px;top:508.00px;font-size:8.30px;font-weight:400;color:#333;font-family:'Liberation Sans', sans-serif;transform:scaleX(1.1607);">%</div>
<div class="t n" style="left:581.22px;top:610.00px;font-size:15.80px;font-weight:400;color:#2a2a2a;font-family:'Liberation Sans', sans-serif;transform:scaleX(1.2531);">13</div>
<div class="t n" style="left:605.66px;top:610.00px;font-size:8.30px;font-weight:400;color:#333;font-family:'Liberation Sans', sans-serif;transform:scaleX(1.1607);">%</div>
<div class="t n" style="left:553.24px;top:526.00px;font-size:8.30px;font-weight:400;color:#333;font-family:'Liberation Sans', sans-serif;transform:scaleX(1.1070);">CPU Utilization (WMI)</div>
<div class="t n" style="left:660.65px;top:526.00px;font-size:8.30px;font-weight:400;color:#333;font-family:'Liberation Sans', sans-serif;transform:scaleX(1.1300);">Memory Utilization (W...</div>
<div class="t n" style="left:776.65px;top:526.00px;font-size:8.30px;font-weight:400;color:#333;font-family:'Liberation Sans', sans-serif;transform:scaleX(1.1300);">Disk Utilization (WMI)</div>
<div class="t n" style="left:547.34px;top:628.00px;font-size:8.30px;font-weight:400;color:#333;font-family:'Liberation Sans', sans-serif;transform:scaleX(1.1052);">CPU Utilization (VIWeb...</div>
<div class="t n" style="left:660.49px;top:628.00px;font-size:8.30px;font-weight:400;color:#333;font-family:'Liberation Sans', sans-serif;transform:scaleX(1.0633);">Disk I/O Usage (VIWeb...</div>
<div class="t n" style="left:770.88px;top:628.00px;font-size:8.30px;font-weight:400;color:#333;font-family:'Liberation Sans', sans-serif;transform:scaleX(1.0864);">Network Usage (VIWeb...</div>
<div class="t n" style="left:684.79px;top:561.00px;font-size:27.50px;font-weight:400;color:#2a2a2a;font-family:'Liberation Sans', sans-serif;transform:scaleX(1.0966);">583</div>
<div class="t n" style="left:804.79px;top:561.00px;font-size:27.50px;font-weight:400;color:#2a2a2a;font-family:'Liberation Sans', sans-serif;transform:scaleX(1.0962);">59</div>
<div class="t n" style="left:693.89px;top:605.00px;font-size:13.20px;font-weight:400;color:#333;font-family:'Liberation Sans', sans-serif;transform:scaleX(1.0553);">kBps</div>
<div class="t n" style="left:805.60px;top:605.00px;font-size:13.20px;font-weight:400;color:#333;font-family:'Liberation Sans', sans-serif;transform:scaleX(1.0517);">kBps</div>
<div class="r" style="left:1106.2px;top:635.4px;width:34.5px;height:27px;background:#2b2b2b;border-top:2.5px solid #050505;box-sizing:border-box;"></div>
<div class="t" style="left:1109.03px;top:639.00px;font-size:11.80px;font-weight:700;color:#f25a5a;font-family:'Liberation Sans', sans-serif;transform:scaleX(1.0890);">1785</div>
<div class="t n" style="left:1112.00px;top:651.00px;font-size:7.20px;font-weight:400;color:#9a9a9a;font-family:'Liberation Sans', sans-serif;transform:scaleX(1.0208);">Alarms</div>
<div class="r" style="left:1153px;top:635.2px;width:34.3px;height:27px;background:#36ad6b;border-top:1px solid #6cc994;box-sizing:border-box;"></div>
<svg class="r" style="left:1161px;top:641.5px;" width="19" height="18" viewBox="0 0 19 18" ><g fill="none" stroke="#c6ecd3" stroke-width="1"><path d="M6 4.5 V2.5 A1.5 1.5 0 0 1 7.5 1 H16.5 A1.5 1.5 0 0 1 18 2.5 V7.5 A1.5 1.5 0 0 1 16.5 9 H14"/><path d="M2.5 5 H12.5 A1.5 1.5 0 0 1 14 6.5 V11.5 A1.5 1.5 0 0 1 12.5 13 H6 L3.5 16 L3.8 13 H2.5 A1.5 1.5 0 0 1 1 11.5 V6.5 A1.5 1.5 0 0 1 2.5 5 Z"/></g><rect x="3.5" y="7.3" width="8" height="3.5" fill="#9ed8b3"/></svg>
<svg class="r" style="left:0;top:0" width="1200" height="662" viewBox="0 0 1200 662"><g fill="#666666"><path d="M1036.6 8.4 C1033.2 8.8 1030.6 10.6 1028.9 13.2 L1026.2 13.6 L1025.4 15.3 L1028.2 15.5 L1030.8 18.1 L1031 20.1 L1032.6 19.2 L1032.9 16.4 C1035.4 14.6 1036.8 11.8 1036.6 8.4 Z"/></g>
<circle cx="1033.2" cy="12.3" r="1.25" fill="#e9e9e9"/>
<g stroke="#666666" stroke-width="0.8" fill="none"><path d="M1025.8 17.6 Q1027.6 17.8 1027.9 19.7 M1025.6 19.2 Q1026.3 19.3 1026.4 20.1"/></g>
<g fill="none" stroke="#666666" stroke-width="1.3"><rect x="1052" y="8.6" width="15.4" height="10.2"/>
<path d="M1059.6 6.8 V8.6 M1059.6 18.8 V21.6 M1055.2 18.8 V20.4 M1064 18.8 V20.4"/></g>
<path d="M1058.6 11.6 L1061.3 13.7 L1058.6 15.8 Z" fill="#666666"/>
<g fill="none" stroke="#666666" stroke-width="1.3"><path d="M1084.9 17 V12.6 A3.6 3.6 0 0 1 1092.1 12.6 V16.6"/>
<path d="M1084.9 16.8 Q1085.2 19.6 1088.4 19.6"/></g>
<g fill="#666666"><rect x="1082.2" y="13.2" width="1.8" height="3.6" rx="0.6"/><rect x="1093" y="13.2" width="1.8" height="3.6" rx="0.6"/><circle cx="1088.6" cy="19.6" r="0.9"/></g>
<g fill="none" stroke="#666666" stroke-width="1.2"><circle cx="1111.8" cy="13.6" r="4.7"/><path d="M1115.2 17 L1118.8 20.6"/></g>
<path d="M1109.6 10.6 A3.4 3.4 0 0 0 1109.6 16.6 A4.2 4.2 0 0 1 1109.6 10.6 Z" fill="#9a9a9a"/>
<g fill="#666666"><path d="M1137.3 7.6 C1138 7.6 1138.3 8.1 1138.3 8.6 C1140.4 9.2 1141.1 11 1141.1 13.3 L1141.2 16.6 L1142.7 18.4 L1131.9 18.4 L1133.4 16.6 L1133.5 13.3 C1133.5 11 1134.2 9.2 1136.3 8.6 C1136.3 8.1 1136.6 7.6 1137.3 7.6 Z"/>
<path d="M1135.8 19 L1138.8 19 C1138.7 19.9 1138.1 20.4 1137.3 20.4 C1136.5 20.4 1135.9 19.9 1135.8 19 Z"/></g>
<path d="M1167.30 13.27 L1169.08 13.37 L1169.08 15.83 L1167.30 15.93 L1166.98 16.70 L1168.17 18.03 L1166.43 19.77 L1165.10 18.58 L1164.33 18.90 L1164.23 20.68 L1161.77 20.68 L1161.67 18.90 L1160.90 18.58 L1159.57 19.77 L1157.83 18.03 L1159.02 16.70 L1158.70 15.93 L1156.92 15.83 L1156.92 13.37 L1158.70 13.27 L1159.02 12.50 L1157.83 11.17 L1159.57 9.43 L1160.90 10.62 L1161.67 10.30 L1161.77 8.52 L1164.23 8.52 L1164.33 10.30 L1165.10 10.62 L1166.43 9.43 L1168.17 11.17 L1166.98 12.50 Z M1163 11.5 A3.1 3.1 0 1 0 1163 17.7 A3.1 3.1 0 1 0 1163 11.5 Z" fill="#6a6d72" fill-rule="evenodd"/>
<circle cx="1187.3" cy="13.8" r="8.8" fill="#f3f3f3"/>
<circle cx="1187.3" cy="11.3" r="3" fill="#c9c9c9"/><path d="M1181.1 20.3 C1181.6 16.3 1184.3 15.3 1187.3 15.3 C1190.3 15.3 1193 16.3 1193.5 20.3 Q1187.3 23.3 1181.1 20.3 Z" fill="#c9c9c9"/>
<path d="M881 68.2 L885.3 62 L890 68.2 Z" fill="#fcc6a6"/>
<path d="M882 68.2 L892.2 60.2 L894.6 68.2 Z" fill="#9ff3cb"/>
<path d="M882.6 68.2 L887.6 64 L893.4 68.2 Z" fill="#a9b98d"/>
<path d="M879.6 59 V68.3 H894.8" fill="none" stroke="#6f7580" stroke-width="1.1"/>
<g fill="none" stroke="#5a616d" stroke-width="1.15" stroke-linecap="round">
<path d="M913.3 67.2 V63 C913.3 60.6 914.5 59.2 916.4 59.2 C918.3 59.2 919.5 60.6 919.5 63 V67.2"/><path d="M911.6 67.6 H921.2"/>
<path d="M910.2 57.4 L911.5 58.7 M922.6 57.4 L921.3 58.7 M907.8 60.4 L910.3 61.2 M925 60.4 L922.5 61.2 M907.8 64.8 L910.3 64.1 M925 64.8 L922.5 64.1"/></g>
<circle cx="916.4" cy="58.1" r="0.9" fill="#5a616d"/><circle cx="916.4" cy="68.9" r="1" fill="#5a616d"/>
<rect x="938" y="62.3" width="6" height="3.7" rx="0.6" fill="#a3a8b1"/>
<path d="M939.8 62.3 Q940 59.8 943 59.7 M939.8 66 Q940 68.1 943 68.1" fill="none" stroke="#a3a8b1" stroke-width="0.9"/>
<circle cx="945" cy="59.7" r="1.1" fill="#6b7280"/><circle cx="945" cy="68.1" r="1.1" fill="#6b7280"/>
<rect x="947" y="58.1" width="5" height="3.5" fill="#6b7280"/><rect x="947" y="66.2" width="5" height="3.6" fill="#6b7280"/>
<path d="M949.5 61.6 V64.5" stroke="#6b7280" stroke-width="0.8"/><path d="M948.5 63.8 L950.5 63.8 L949.5 65.3 Z" fill="#4a5261"/>
<path d="M949.5 58.1 V61.6 M949.5 66.2 V69.8" stroke="#c6c9cf" stroke-width="0.5"/>
<rect x="966.9" y="59.6" width="14.8" height="9.4" rx="1.8" fill="none" stroke="#8e949e" stroke-width="1.2"/>
<path d="M969.3 61.2 Q974.3 65.4 979.3 61.2 M969 67.2 L971.4 65.1 M979.8 67.2 L977.4 65.1" fill="none" stroke="#8e949e" stroke-width="1"/>
<circle cx="980.8" cy="59.7" r="2.6" fill="#f0606a"/>
<g fill="none" stroke="#4a5261" stroke-width="1.8"><path d="M1006.6 60.9 H1000.2 A2.8 2.8 0 0 0 1000.2 66.1 H1001.2"/>
<path d="M1003.8 66.1 H1010.4 A2.8 2.8 0 0 0 1010.4 60.9 H1009.3"/></g>
<path d="M1005.6 59.2 L1008.2 60.9 L1005.6 62.6 Z M1004.6 64.4 L1002 66.1 L1004.6 67.8 Z" fill="#4a5261"/>
<path d="M1028.1 65.7 L1032.7 60 L1036.8 65.7 L1041.1 60.4" fill="none" stroke="#4a5261" stroke-width="1.3"/>
<g fill="#4a5261"><circle cx="1028.1" cy="65.7" r="1.6"/><circle cx="1032.7" cy="60" r="1.6"/><circle cx="1036.8" cy="65.7" r="1.6"/><circle cx="1041.1" cy="60.4" r="1.6"/></g>
<circle cx="1060.3" cy="63.4" r="5.6" fill="#8c919b"/>
<g fill="none" stroke="#f4f4f6" stroke-width="0.7"><ellipse cx="1060.3" cy="63.4" rx="2.4" ry="5.4"/><path d="M1054.8 61.6 H1065.8 M1054.8 65.2 H1065.8 M1060.3 58 V68.8"/></g>
<rect x="1078.6" y="58.9" width="12.6" height="8.6" fill="none" stroke="#9096a0" stroke-width="1"/>
<path d="M1081.5 68.6 H1084.5" stroke="#9096a0" stroke-width="1"/>
<circle cx="1089.7" cy="66.2" r="4.7" fill="#4a5261"/>
<path d="M1087.6 66 L1089 67 L1087.6 68 M1091.8 64.4 L1090.4 65.4 L1091.8 66.4" fill="none" stroke="#fff" stroke-width="0.9"/>
<rect x="1108.1" y="58.4" width="13.2" height="9.4" fill="#8a909a"/><rect x="1109.3" y="59.6" width="10.8" height="7" fill="#4a5261"/>
<path d="M1110.6 61.4 L1112 62.6 L1110.6 63.8 M1112.6 64.4 H1114.3" stroke="#e6e6e6" stroke-width="0.8" fill="none"/>
<path d="M1141.2 58.3 L1135.2 63.5 L1141.2 68.7" fill="none" stroke="#555" stroke-width="1.15"/>
<path d="M1154.4 58.3 L1160.4 63.5 L1154.4 68.7" fill="none" stroke="#555" stroke-width="1.15"/></svg></body></html>
